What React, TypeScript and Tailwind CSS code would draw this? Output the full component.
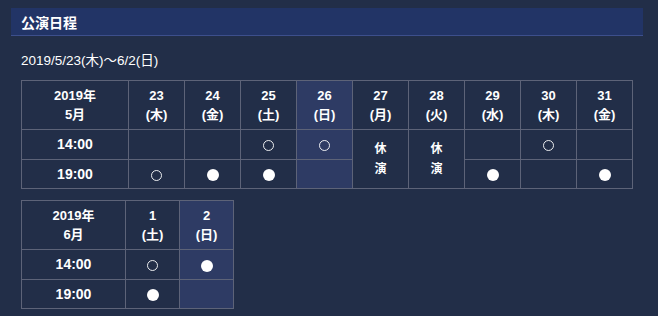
import React from 'react';

type Mark = 'open' | 'full' | '';

interface Day {
  date: string;
  week: string;
  sunday?: boolean;
  rest?: boolean;
  m: Mark;
  e: Mark;
}

const may: Day[] = [
  { date: '23', week: '(木)', m: '', e: 'open' },
  { date: '24', week: '(金)', m: '', e: 'full' },
  { date: '25', week: '(土)', m: 'open', e: 'full' },
  { date: '26', week: '(日)', sunday: true, m: 'open', e: '' },
  { date: '27', week: '(月)', rest: true, m: '', e: '' },
  { date: '28', week: '(火)', rest: true, m: '', e: '' },
  { date: '29', week: '(水)', m: '', e: 'full' },
  { date: '30', week: '(木)', m: 'open', e: '' },
  { date: '31', week: '(金)', m: '', e: 'full' },
];

const june: Day[] = [
  { date: '1', week: '(土)', m: 'open', e: 'full' },
  { date: '2', week: '(日)', sunday: true, m: 'full', e: '' },
];

function Dot({ mark }: { mark: Mark }) {
  if (mark === 'open')
    return <span className="inline-block w-[11px] h-[11px] rounded-full border border-white/90 align-middle" />;
  if (mark === 'full')
    return <span className="inline-block w-[12px] h-[12px] rounded-full bg-white align-middle" />;
  return null;
}

const cell = 'border border-[#5d6378] text-center p-0';

function Schedule({ year, month, days, firstW, colW }: { year: string; month: string; days: Day[]; firstW: number; colW: number }) {
  return (
    <table
      className="border-collapse table-fixed text-white font-bold text-[13px] leading-[19px]"
      style={{ width: firstW + colW * days.length }}
    >
      <colgroup>
        <col style={{ width: firstW }} />
        {days.map((d) => (
          <col key={d.date} style={{ width: colW }} />
        ))}
      </colgroup>
      <tbody>
        <tr className="h-[49px]">
          <td className={cell}>
            {year}
            <br />
            {month}
          </td>
          {days.map((d) => (
            <td key={d.date} className={`${cell} ${d.sunday ? 'bg-[#2e3b64]' : ''}`}>
              {d.date}
              <br />
              {d.week}
            </td>
          ))}
        </tr>
        <tr className="h-[30px]">
          <td className={`${cell} text-[14px]`}>14:00</td>
          {days.map((d) =>
            d.rest ? (
              <td key={d.date} rowSpan={2} className={`${cell} text-[12px] leading-[20px]`}>
                休
                <br />
                演
              </td>
            ) : (
              <td key={d.date} className={`${cell} ${d.sunday ? 'bg-[#2e3b64]' : ''}`}>
                <Dot mark={d.m} />
              </td>
            )
          )}
        </tr>
        <tr className="h-[29px]">
          <td className={`${cell} text-[14px]`}>19:00</td>
          {days
            .filter((d) => !d.rest)
            .map((d) => (
              <td key={d.date} className={`${cell} ${d.sunday ? 'bg-[#2e3b64]' : ''}`}>
                <Dot mark={d.e} />
              </td>
            ))}
        </tr>
      </tbody>
    </table>
  );
}

export default function App() {
  return (
    <div
      className="w-[658px] h-[316px] bg-[#222e48] pt-[8px] overflow-hidden"
      style={{ fontFamily: '"Liberation Sans", "Noto Sans CJK JP", sans-serif' }}
    >
      <div className="ml-[11px] w-[632px] h-[28px] bg-[#223466] border-b border-[#3d4f8c] pl-[10px] flex items-center">
        <h2 className="text-white font-bold text-[14px] leading-none" style={{ fontFamily: '"Noto Sans CJK JP", sans-serif' }}>
          公演日程
        </h2>
      </div>
      <p className="ml-[21px] mt-[16px] text-white text-[13.5px] leading-[18px]">2019/5/23(木)〜6/2(日)</p>
      <div className="ml-[21px] mt-[10px]">
        <Schedule year="2019年" month="5月" days={may} firstW={107} colW={56} />
      </div>
      <div className="ml-[21px] mt-[11px]">
        <Schedule year="2019年" month="6月" days={june} firstW={104} colW={54} />
      </div>
    </div>
  );
}
